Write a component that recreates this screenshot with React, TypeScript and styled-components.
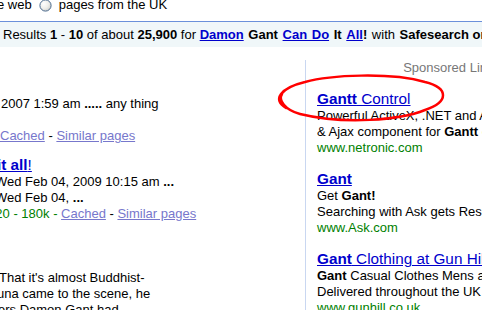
import React from "react";
import styled, { createGlobalStyle } from "styled-components";

const GlobalStyle = createGlobalStyle`
  html, body { margin: 0; padding: 0; background: #fff; }
  body {
    font-family: "Liberation Sans", Arial, sans-serif;
    font-size: 13px;
    color: #000;
    overflow: hidden;
  }
`;

const Page = styled.div`
  position: relative;
  width: 482px;
  height: 310px;
  overflow: hidden;
  background: #fff;
`;

const TopRow = styled.div`
  display: flex;
  align-items: center;
  height: 16px;
  line-height: 16px;
  margin-top: -3px;
  white-space: nowrap;
`;

const TopText = styled.span<{ $shift?: number }>`
  margin-left: ${(p) => p.$shift ?? 0}px;
`;

const RadioWrap = styled.span`
  display: inline-flex;
  width: 13px;
  height: 13px;
  margin: 0 7px 0 7px;
`;

const ResultsBar = styled.div`
  margin-top: 8px;
  border-top: 1px solid #6b90da;
  background: #f0f7f9;
  padding: 4px 0 4px 3px;
  line-height: 17px;
  white-space: nowrap;
`;

const Query = styled.span`
  word-spacing: 1px;
`;

const BarLink = styled.a`
  color: #0000cc;
  font-weight: bold;
  text-decoration: underline;
`;

const Main = styled.div`
  display: flex;
  align-items: flex-start;
`;

const LeftColumn = styled.div`
  flex: none;
  width: 305px;
  padding-top: 49px;
`;

const Result = styled.div<{ $gap: number }>`
  margin-top: ${(p) => p.$gap}px;
`;

const Line = styled.div<{ $shift?: number }>`
  line-height: 16px;
  white-space: nowrap;
  margin-left: ${(p) => p.$shift ?? 0}px;
`;

const ResultTitle = styled.div<{ $shift?: number }>`
  font-size: 15.3px;
  line-height: 18px;
  white-space: nowrap;
  margin-left: ${(p) => p.$shift ?? 0}px;
`;

const TitleLink = styled.a`
  color: #0000cc;
  text-decoration: underline;
`;

const FaintLink = styled.a`
  color: #7777cc;
  text-decoration: underline;
`;

const Green = styled.span`
  color: #008000;
`;

const AdColumn = styled.div`
  flex: none;
  width: 183px;
  min-height: 260px;
  margin-top: 13px;
  padding-left: 11px;
  border-left: 1px solid #c9d7f1;
`;

const SponsoredHeader = styled.div`
  text-align: right;
  color: #777;
  line-height: 16px;
  white-space: nowrap;
`;

const Ad = styled.div`
  margin-top: 14px;
`;

const AdTitle = styled.div`
  font-size: 15.3px;
  line-height: 18px;
  white-space: nowrap;
`;

const AdLine = styled.div`
  line-height: 16px;
  white-space: nowrap;
`;

const AdUrl = styled.div`
  line-height: 16px;
  white-space: nowrap;
  color: #008000;
`;

const Overlay = styled.svg`
  position: absolute;
  left: 0;
  top: 0;
  pointer-events: none;
`;

function Radio() {
  return (
    <RadioWrap>
      <svg width="13" height="13" viewBox="0 0 13 13">
        <defs>
          <radialGradient id="rg" cx="0.35" cy="0.35" r="0.7">
            <stop offset="0" stopColor="#ffffff" />
            <stop offset="0.6" stopColor="#eeeeea" />
            <stop offset="1" stopColor="#cfd0cc" />
          </radialGradient>
        </defs>
        <circle cx="6.5" cy="6.5" r="5.6" fill="url(#rg)" stroke="#4a6a8e" strokeWidth="1" />
      </svg>
    </RadioWrap>
  );
}

export default function App() {
  return (
    <>
      <GlobalStyle />
      <Page>
        <TopRow>
          <TopText $shift={-3}>e web</TopText>
          <Radio />
          <TopText>pages from the UK</TopText>
        </TopRow>

        <ResultsBar>
          Results <b>1</b> - <b>10</b> of about <b>25,900</b> for{" "}
          <Query>
            <BarLink>Damon</BarLink> <b>Gant</b> <BarLink>Can Do</BarLink> <b>It</b>{" "}
            <BarLink>All</BarLink>
            <b>!</b> with{" "}
          </Query>
          <b>Safesearch on</b>
        </ResultsBar>

        <Main>
          <LeftColumn>
            <Result $gap={0}>
              <Line $shift={1}>
                2007 1:59 am <b>.....</b> any thing
              </Line>
              <Line>&nbsp;</Line>
              <Line $shift={0}>
                <FaintLink>Cached</FaintLink> - <FaintLink>Similar pages</FaintLink>
              </Line>
            </Result>

            <Result $gap={12}>
              <ResultTitle $shift={-3}>
                <TitleLink>
                  <b>it all</b>!
                </TitleLink>
              </ResultTitle>
              <Line $shift={-5}>
                Wed Feb 04, 2009 10:15 am <b>...</b>
              </Line>
              <Line $shift={-5}>
                Wed Feb 04, <b>...</b>
              </Line>
              <Line $shift={-4.7}>
                <Green>20 - 180k - </Green>
                <FaintLink>Cached</FaintLink> - <FaintLink>Similar pages</FaintLink>
              </Line>
            </Result>

            <Result $gap={14}>
              <ResultTitle>&nbsp;</ResultTitle>
              <Line>&nbsp;</Line>
              <Line $shift={-1}>That it's almost Buddhist-</Line>
              <Line $shift={-3}>una came to the scene, he</Line>
              <Line $shift={-2}>ers Damon Gant had</Line>
            </Result>
          </LeftColumn>

          <AdColumn>
            <SponsoredHeader>Sponsored Links</SponsoredHeader>

            <Ad>
              <AdTitle>
                <TitleLink>
                  <b>Gantt</b> Control
                </TitleLink>
              </AdTitle>
              <AdLine>Powerful ActiveX, .NET and Applet</AdLine>
              <AdLine>
                &amp; Ajax component for <b>Gantt</b> charts
              </AdLine>
              <AdUrl>www.netronic.com</AdUrl>
            </Ad>

            <Ad>
              <AdTitle>
                <TitleLink>
                  <b>Gant</b>
                </TitleLink>
              </AdTitle>
              <AdLine>
                Get <b>Gant!</b>
              </AdLine>
              <AdLine>Searching with Ask gets Results Fast</AdLine>
              <AdUrl>www.Ask.com</AdUrl>
            </Ad>

            <Ad>
              <AdTitle>
                <TitleLink>
                  <b>Gant</b> Clothing at Gun Hill
                </TitleLink>
              </AdTitle>
              <AdLine>
                <b>Gant</b> Casual Clothes Mens and Womens
              </AdLine>
              <AdLine>Delivered throughout the UK</AdLine>
              <AdUrl>www.gunhill.co.uk</AdUrl>
            </Ad>
          </AdColumn>
        </Main>

        <Overlay width="482" height="310" viewBox="0 0 482 310">
          <path
            d="M 286 108 C 272 100, 280 88, 305 82 C 330 75, 390 72, 425 82 C 449 88, 449 102, 425 110 C 400 120, 345 125, 300 114 C 285 110, 278 100, 282 94"
            fill="none"
            stroke="#ff0000"
            strokeWidth="2.5"
            strokeLinecap="round"
          />
        </Overlay>
      </Page>
    </>
  );
}
